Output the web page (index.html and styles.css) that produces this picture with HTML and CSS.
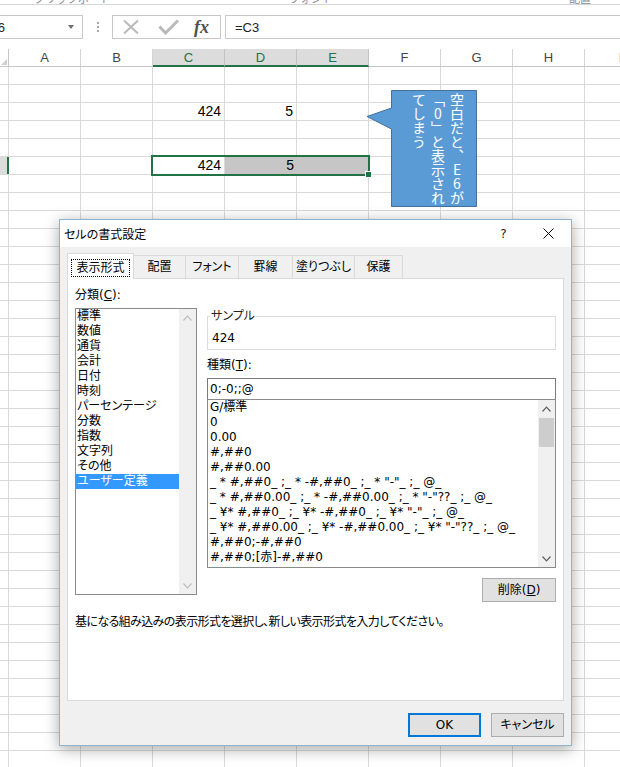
FILE: index.html
```html
<!DOCTYPE html>
<html lang="ja">
<head>
<meta charset="utf-8">
<title>セルの書式設定</title>
<link rel="stylesheet" href="styles.css">
</head>
<body>
<div class="app">
  <div class="ribbon-strip">
    <span class="rb-label rb1">クリップボード</span>
    <span class="rb-label rb2">フォント</span>
    <span class="rb-label rb3">配置</span>
  </div>

  <div class="formula-bar">
    <div class="name-box"><span class="nb-text">E6</span><span class="nb-arrow"></span></div>
    <div class="fb-dots"><i></i><i></i><i></i></div>
    <div class="fn-box">
      <svg class="ic-cancel" width="18" height="16" viewBox="0 0 18 16"><path d="M2 1.5 L16 14.5 M16 1.5 L2 14.5"/></svg>
      <svg class="ic-enter" width="21" height="16" viewBox="0 0 21 16"><path d="M1.5 7.5 L7.5 14 L20 1.5"/></svg>
      <span class="fx">fx</span>
    </div>
    <div class="formula-input">=C3</div>
  </div>

  <div class="col-headers">
    <div class="corner"><span class="corner-tri"></span></div>
    <div class="ch">A</div>
    <div class="ch">B</div>
    <div class="ch sel">C</div>
    <div class="ch sel">D</div>
    <div class="ch sel">E</div>
    <div class="ch">F</div>
    <div class="ch">G</div>
    <div class="ch">H</div>
    <div class="ch">I</div>
  </div>

  <div class="sheet">
    <div class="row-head-sel r6"></div>
    <div class="cell r3 cC">424</div>
    <div class="cell r3 cD">5</div>
    <div class="cell r6 cC">424</div>
    <div class="cell hl r6 cD">5</div>
    <div class="cell hl r6 cE"></div>
    <div class="selection"></div>
    <div class="fill-handle"></div>
  </div>

  <div class="callout">
    <svg class="callout-shape" width="112" height="119" viewBox="0 0 112 119"><path d="M25.5 1.5 H110.5 V117.5 H25.5 V40 L1 27.5 L25.5 19 Z"/></svg>
    <div class="callout-text">空白だと、E6が<br>「0」と表示され<br>てしまう</div>
  </div>

  <div class="dialog">
    <div class="dlg-title">
      <span class="dlg-caption">セルの書式設定</span>
      <span class="dlg-help">?</span>
      <span class="dlg-close"><svg width="11" height="11" viewBox="0 0 11 11"><path d="M0.5 0.5 L10.5 10.5 M10.5 0.5 L0.5 10.5"/></svg></span>
    </div>
    <div class="dlg-body">
      <div class="tabs">
        <div class="tab active t1"><span class="focus">表示形式</span></div>
        <div class="tab t2">配置</div>
        <div class="tab t3">フォント</div>
        <div class="tab t4">罫線</div>
        <div class="tab t5">塗りつぶし</div>
        <div class="tab t6">保護</div>
      </div>
      <div class="panel">
        <div class="panel-grid">
          <div class="left-col">
            <div class="lbl">分類(<u>C</u>):</div>
            <div class="cat-list">
              <div class="items">
                <div class="item">標準</div>
                <div class="item">数値</div>
                <div class="item">通貨</div>
                <div class="item">会計</div>
                <div class="item">日付</div>
                <div class="item">時刻</div>
                <div class="item">パーセンテージ</div>
                <div class="item">分数</div>
                <div class="item">指数</div>
                <div class="item">文字列</div>
                <div class="item">その他</div>
                <div class="item selected">ユーザー定義</div>
              </div>
              <div class="vscroll disabled">
                <span class="arr"><svg width="9" height="6" viewBox="0 0 9 6"><path d="M0.5 5.5 L4.5 1.2 L8.5 5.5"/></svg></span>
                <span class="arr"><svg width="9" height="6" viewBox="0 0 9 6"><path d="M0.5 0.5 L4.5 4.8 L8.5 0.5"/></svg></span>
              </div>
            </div>
          </div>
          <div class="right-col">
            <fieldset class="sample">
              <legend>サンプル</legend>
              <div class="sample-val">424</div>
            </fieldset>
            <div class="lbl type-lbl">種類(<u>T</u>):</div>
            <div class="type-input">0;-0;;@</div>
            <div class="fmt-list">
              <div class="items fmt-items">
                <div class="item">G/標準</div>
                <div class="item">0</div>
                <div class="item">0.00</div>
                <div class="item">#,##0</div>
                <div class="item">#,##0.00</div>
                <div class="item">_ * #,##0_ ;_ * -#,##0_ ;_ * "-"_ ;_ @_</div>
                <div class="item">_ * #,##0.00_ ;_ * -#,##0.00_ ;_ * "-"??_ ;_ @_</div>
                <div class="item">_ ¥* #,##0_ ;_ ¥* -#,##0_ ;_ ¥* "-"_ ;_ @_</div>
                <div class="item">_ ¥* #,##0.00_ ;_ ¥* -#,##0.00_ ;_ ¥* "-"??_ ;_ @_</div>
                <div class="item">#,##0;-#,##0</div>
                <div class="item">#,##0;[赤]-#,##0</div>
              </div>
              <div class="vscroll">
                <span class="arr"><svg width="9" height="6" viewBox="0 0 9 6"><path d="M0.5 5.5 L4.5 1.2 L8.5 5.5"/></svg></span>
                <div class="thumb"></div>
                <span class="arr"><svg width="9" height="6" viewBox="0 0 9 6"><path d="M0.5 0.5 L4.5 4.8 L8.5 0.5"/></svg></span>
              </div>
            </div>
            <div class="del-row"><button class="btn">削除(<u>D</u>)</button></div>
          </div>
        </div>
        <div class="desc">基になる組み込みの表示形式を選択し、新しい表示形式を入力してください。</div>
      </div>
      <div class="dlg-buttons">
        <button class="btn ok">OK</button>
        <button class="btn">キャンセル</button>
      </div>
    </div>
  </div>
</div>
</body>
</html>
```

FILE: styles.css
```css
* { box-sizing: border-box; }
html, body { margin: 0; padding: 0; background: #fff; }
body {
  width: 620px;
  height: 767px;
  overflow: hidden;
  font-family: "Liberation Sans", Arial, sans-serif;
}
.app {
  position: relative;
  width: 620px;
  height: 767px;
  overflow: hidden;
}

/* ribbon remnant */
.ribbon-strip {
  display: flex;
  align-items: flex-end;
  height: 5px;
  border-bottom: 1px solid #d6d6d6;
  overflow: hidden;
  font-family: "Noto Sans CJK JP", sans-serif;
  font-size: 11px;
  line-height: 12px;
  color: #888;
}
.rb-label { flex: none; }
.rb1 { margin-left: 34px; }
.rb2 { margin-left: 178px; }
.rb3 { margin-left: 236px; }

/* formula bar */
.formula-bar {
  display: flex;
  height: 24px;
  margin-top: 10px;
}
.name-box {
  flex: none;
  width: 97px;
  margin-left: -14px;
  border: 1px solid #c8c8c8;
  border-left: none;
  display: flex;
  align-items: center;
  padding-left: 3px;
  font-size: 13px;
  color: #222;
}
.nb-arrow {
  margin-left: auto;
  margin-right: 8px;
  width: 0;
  height: 0;
  border-left: 3.5px solid transparent;
  border-right: 3.5px solid transparent;
  border-top: 4px solid #6f6f6f;
}
.fb-dots {
  flex: none;
  width: 29px;
  display: flex;
  flex-direction: column;
  align-items: center;
  justify-content: center;
  gap: 2px;
}
.fb-dots i {
  display: block;
  width: 2px;
  height: 2px;
  background: #a8a8a8;
}
.fn-box {
  flex: none;
  width: 109px;
  border: 1px solid #c8c8c8;
  display: flex;
  align-items: center;
  padding-left: 9px;
}
.ic-cancel path { stroke: #b9b9b9; stroke-width: 2; fill: none; }
.ic-enter { margin-left: 18px; }
.ic-enter path { stroke: #b9b9b9; stroke-width: 3; fill: none; }
.fx {
  margin-left: 15px;
  font-family: "Liberation Serif", "Times New Roman", serif;
  font-style: italic;
  font-weight: bold;
  font-size: 18px;
  color: #4f4f4f;
  line-height: 1;
}
.formula-input {
  flex: 1;
  margin-left: 4px;
  border: 1px solid #c8c8c8;
  border-right: none;
  padding-left: 9px;
  display: flex;
  align-items: center;
  font-size: 13px;
  color: #222;
}

/* column headers */
.col-headers {
  display: flex;
  height: 18px;
  margin-top: 10px;
  font-size: 13px;
  color: #444;
}
.corner {
  flex: none;
  width: 9px;
  border-right: 1px solid #c6c6c6;
  border-bottom: 1px solid #c6c6c6;
  position: relative;
}
.corner-tri {
  position: absolute;
  right: 1px;
  bottom: 1px;
  width: 0;
  height: 0;
  border-left: 6px solid transparent;
  border-bottom: 6px solid #d0d0d0;
}
.ch {
  flex: none;
  width: 72px;
  border-right: 1px solid #d4d4d4;
  border-bottom: 1px solid #c6c6c6;
  display: flex;
  align-items: center;
  justify-content: center;
  line-height: 1;
}
.ch.sel {
  background: #dcdcdc;
  color: #217346;
  border-right-color: #c2c2c2;
  border-bottom: 2px solid #217346;
}

/* sheet */
.sheet {
  position: relative;
  display: grid;
  grid-template-columns: 9px repeat(9, 72px);
  grid-template-rows: repeat(39, 18px);
  height: 700px;
  background-image:
    linear-gradient(to right, #d9d9d9 1px, transparent 1px),
    linear-gradient(to bottom, transparent 17px, #d9d9d9 17px);
  background-size: 72px 18px, 72px 18px;
  background-position: 8px 0, 0 0;
}
.r3 { grid-row: 3; }
.r6 { grid-row: 6; }
.cC { grid-column: 4; }
.cD { grid-column: 5; }
.cE { grid-column: 6; }
.cell {
  width: 71px;
  height: 17px;
  font-size: 14px;
  line-height: 17px;
  text-align: right;
  padding-right: 3px;
  color: #000;
}
.cell.hl {
  width: 72px;
  background: #c6c6c6;
}
.row-head-sel {
  grid-column: 1;
  width: 9px;
  height: 17px;
  background: #dcdcdc;
  border-right: 2px solid #217346;
}
.selection {
  position: absolute;
  left: 151px;
  top: 88px;
  width: 219px;
  height: 21px;
  border: 2px solid #217346;
}
.fill-handle {
  position: absolute;
  left: 365px;
  top: 104px;
  width: 7px;
  height: 7px;
  background: #217346;
  border: 1px solid #fff;
}

/* callout */
.callout {
  position: absolute;
  left: 366px;
  top: 89px;
  width: 112px;
  height: 119px;
}
.callout-shape {
  position: absolute;
  left: 0;
  top: 0;
}
.callout-shape path {
  fill: #5b9bd5;
  stroke: #41719c;
  stroke-width: 1;
}
.callout-text {
  position: relative;
  width: 112px;
  height: 119px;
  writing-mode: vertical-rl;
  text-orientation: upright;
  padding: 4px 12px 0 0;
  font-family: "Noto Sans CJK JP", sans-serif;
  font-size: 14px;
  line-height: 19px;
  color: #fff;
}

/* dialog */
.dialog {
  position: absolute;
  left: 59px;
  top: 219px;
  width: 513px;
  height: 527px;
  border: 1px solid #8db6cc;
  background: #f0f0f0;
  box-shadow: 0 3px 14px rgba(0, 0, 0, 0.35);
  display: flex;
  flex-direction: column;
  font-family: "DejaVu Sans", "Noto Sans CJK JP", sans-serif;
  font-feature-settings: "palt";
  font-size: 12px;
  color: #000;
}
.dlg-title {
  flex: none;
  height: 27px;
  background: #fff;
  display: flex;
  align-items: center;
  padding-left: 4px;
}
.dlg-caption { flex: 1; }
.dlg-help {
  width: 45px;
  text-align: center;
  font-size: 12px;
  color: #222;
}
.dlg-close {
  width: 45px;
  display: flex;
  justify-content: center;
  align-items: center;
}
.dlg-close path { stroke: #000; stroke-width: 1; fill: none; }

.dlg-body {
  flex: 1;
  display: flex;
  flex-direction: column;
  padding: 6px 7px 8px;
}
.tabs {
  display: flex;
  align-items: flex-start;
  height: 26px;
  margin-bottom: -1px;
  position: relative;
  z-index: 1;
}
.tab {
  flex: none;
  height: 23px;
  margin-top: 2px;
  margin-left: -1px;
  border: 1px solid #d9d9d9;
  border-bottom: none;
  background: #f0f0f0;
  display: flex;
  align-items: center;
  justify-content: center;
  line-height: 15px;
}
.tab.active {
  height: 26px;
  margin-top: 0;
  margin-left: 0;
  background: #fff;
  position: relative;
  z-index: 2;
  padding-top: 2px;
}
.focus {
  outline: 1px dotted #000;
  padding: 1px 4px 0;
  line-height: 15px;
}
.t1 { width: 67px; }
.t2 { width: 53px; }
.t3 { width: 54px; }
.t4 { width: 55px; }
.t5 { width: 63px; }
.t6 { width: 49px; }

.panel {
  flex: none;
  height: 423px;
  background: #fff;
  border: 1px solid #d9d9d9;
  padding: 9px 7px 0;
}
.panel-grid {
  display: grid;
  grid-template-columns: 122px 349px;
  column-gap: 10px;
  align-items: start;
}
.lbl { line-height: 15px; }
.cat-list {
  margin-top: 5px;
  height: 287px;
  border: 1px solid #8a8a8a;
  display: flex;
}
.items {
  flex: 1;
  line-height: 15px;
}
.item { padding-left: 1px; white-space: pre; }
.item.selected { background: #3399ff; color: #fff; }
.vscroll {
  flex: none;
  width: 17px;
  background: #f0f0f0;
  display: flex;
  flex-direction: column;
}
.arr {
  height: 17px;
  display: flex;
  align-items: center;
  justify-content: center;
}
.vscroll .arr:last-child { margin-top: auto; }
.arr path { fill: none; stroke: #606060; stroke-width: 1.2; }
.vscroll.disabled .arr path { stroke: #bcbcbc; }
.thumb {
  height: 29px;
  margin: 1px 1px 0;
  background: #cdcdcd;
}

.right-col { padding-top: 20px; }
.sample {
  margin: 0;
  min-width: 0;
  padding: 7px 4px 4px 2px;
  border: 1px solid #dcdcdc;
}
.sample legend {
  padding: 0 1px;
  line-height: 16px;
  color: #222;
}
.sample-val {
  padding-left: 2px;
  line-height: 14px;
}
.type-lbl { margin-top: 8px; line-height: 14px; }
.type-input {
  margin-top: 6px;
  height: 22px;
  border: 1px solid #7a7a7a;
  padding-left: 2px;
  line-height: 20px;
}
.fmt-list {
  margin-top: -1px;
  height: 169px;
  border: 1px solid #8a8a8a;
  display: flex;
}
.fmt-items .item { padding-left: 2px; }
.del-row {
  display: flex;
  justify-content: flex-end;
  margin-top: 10px;
}
.btn {
  font: inherit;
  font-feature-settings: "palt";
  color: #000;
  width: 74px;
  height: 24px;
  padding: 0;
  background: #e1e1e1;
  border: 1px solid #adadad;
  line-height: 15px;
}
.desc {
  margin-top: 13px;
  line-height: 15px;
  letter-spacing: -0.6px;
}
.dlg-buttons {
  margin-top: auto;
  display: flex;
  justify-content: flex-end;
  gap: 10px;
}
.dlg-buttons .btn { width: 73px; }
.btn.ok { border: 2px solid #0078d7; }
```
